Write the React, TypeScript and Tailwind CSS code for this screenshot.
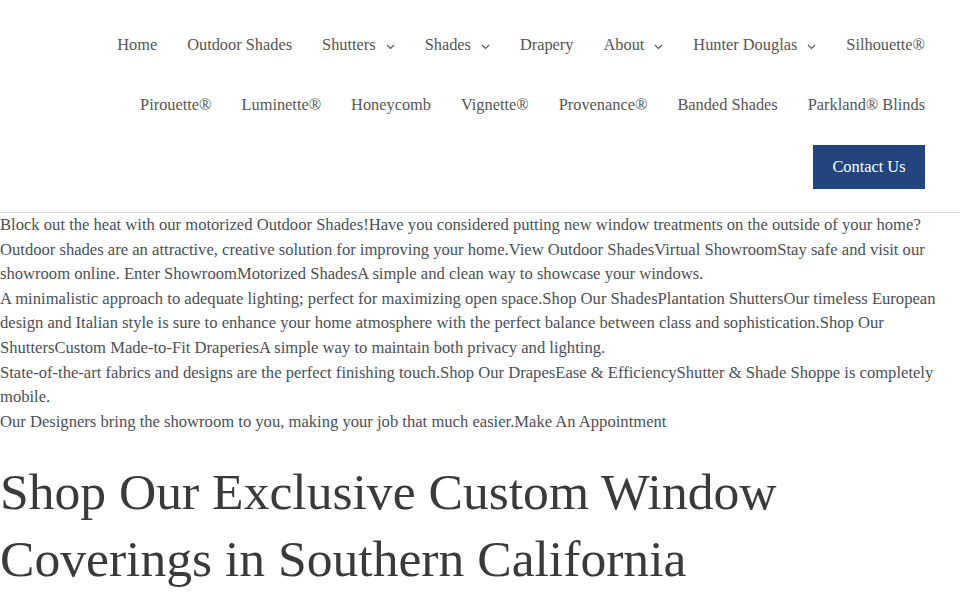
const rowOne = [
  { label: "Home" },
  { label: "Outdoor Shades" },
  { label: "Shutters", caret: true },
  { label: "Shades", caret: true },
  { label: "Drapery" },
  { label: "About", caret: true },
  { label: "Hunter Douglas", caret: true },
  { label: "Silhouette®" },
]

const rowTwo = [
  { label: "Pirouette®" },
  { label: "Luminette®" },
  { label: "Honeycomb" },
  { label: "Vignette®" },
  { label: "Provenance®" },
  { label: "Banded Shades" },
  { label: "Parkland® Blinds" },
]

function Caret() {
  return (
    <svg width="9" height="6" viewBox="0 0 9 6" className="ml-[10px] mt-[3px]" fill="none">
      <polyline points="1,1 4.5,4.5 8,1" stroke="#555" strokeWidth="1.1" />
    </svg>
  )
}

function NavItem({ label, caret }: { label: string; caret?: boolean }) {
  return (
    <li className="flex h-[60px] items-center px-[15px]">
      <a href="#" className="text-[#555555]">
        {label}
      </a>
      {caret && <Caret />}
    </li>
  )
}

export default function App() {
  return (
    <div className="min-h-[600px] bg-white font-['Liberation_Serif',serif] text-[#4b4f58]">
      <header className="border-b border-[#dddddd] pb-[13px] pr-[20px] pt-[15px] text-[16.35px]">
        <nav>
          <ul className="flex justify-end">
            {rowOne.map((item) => (
              <NavItem key={item.label} {...item} />
            ))}
          </ul>
          <ul className="flex justify-end">
            {rowTwo.map((item) => (
              <NavItem key={item.label} {...item} />
            ))}
          </ul>
          <div className="flex h-[64px] items-center justify-end px-[15px]">
            <a
              href="#"
              className="flex h-[44px] w-[112px] items-center justify-center bg-[#224580] text-white"
            >
              Contact Us
            </a>
          </div>
        </nav>
      </header>

      <main>
        <div className="text-[16.6px] leading-[24.6px]">
          <p>
            Block out the heat with our motorized Outdoor Shades!Have you considered putting new
            window treatments on the outside of your home? Outdoor shades are an attractive, creative
            solution for improving your home.View Outdoor ShadesVirtual ShowroomStay safe and visit
            our showroom online. Enter ShowroomMotorized ShadesA simple and clean way to showcase your
            windows.
          </p>
          <p>
            A minimalistic approach to adequate lighting; perfect for maximizing open space.Shop Our
            ShadesPlantation ShuttersOur timeless European design and Italian style is sure to enhance
            your home atmosphere with the perfect balance between class and sophistication.Shop Our
            ShuttersCustom Made-to-Fit DraperiesA simple way to maintain both privacy and lighting.
          </p>
          <p>
            State-of-the-art fabrics and designs are the perfect finishing touch.Shop Our DrapesEase
            &amp; EfficiencyShutter &amp; Shade Shoppe is completely mobile.
          </p>
          <p>
            Our Designers bring the showroom to you, making your job that much easier.Make An
            Appointment
          </p>
        </div>

        <h1 className="mt-6 text-[51.6px] leading-[67px] text-[#3a3a3a]">
          Shop Our Exclusive Custom Window Coverings in Southern California
        </h1>
      </main>
    </div>
  )
}
